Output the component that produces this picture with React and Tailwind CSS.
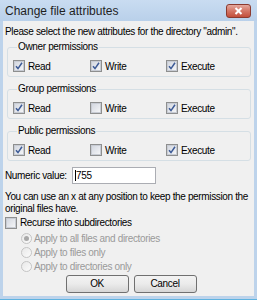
import React from 'react';

const font = { fontFamily: '"Liberation Sans", Arial, sans-serif' };

const Check = ({ checked, label }) => (
    <div className='flex items-center h-[16px]'>
        <span className='w-[12px] h-[12px] border border-[#8e8f8f] bg-white flex items-center justify-center'>
            <span className='w-[10px] h-[10px] bg-gradient-to-br from-[#d4d8e0] to-[#f4f5f7] border border-[#c8ccd4] flex items-center justify-center'>
                {checked && (
                    <svg width='8' height='8' viewBox='0 0 8 8'>
                        <path d='M1 4.3 L3 6.6 L7 0.8' fill='none' stroke='#3c5a96' strokeWidth='1.5' />
                    </svg>
                )}
            </span>
        </span>
        <span className='ml-[3px]'>{label}</span>
    </div>
);

const Group = ({ title, r, w, x, mt }) => (
    <fieldset className={`ml-[4px] mr-[3px] border border-[#d5dfe5] rounded-[3px] pl-[5px] pt-[5px] pb-[2px] ${mt}`}>
        <legend className='ml-[4px] px-[1px] h-[12px] leading-[12px]'>{title}</legend>
        <div className='flex'>
            <div className='w-[77px]'><Check checked={r} label='Read' /></div>
            <div className='w-[76px]'><Check checked={w} label='Write' /></div>
            <div><Check checked={x} label='Execute' /></div>
        </div>
    </fieldset>
);

const Radio = ({ checked, label }) => (
    <div className='flex items-center h-[14px] text-[#9a9a9a]'>
        <span className='w-[11px] h-[11px] rounded-full border border-[#c4c4c4] bg-gradient-to-br from-[#e8e8e8] to-[#fbfbfb] flex items-center justify-center'>
            {checked && <span className='w-[5px] h-[5px] rounded-full bg-[#a8a8a8]' />}
        </span>
        <span className='ml-[2px]'>{label}</span>
    </div>
);

const Button = ({ children }) => (
    <button className='w-[63px] h-[18px] border border-[#707070] rounded-[3px] bg-gradient-to-b from-[#f3f3f3] via-[#ebebeb] to-[#d6d6d6] text-black leading-[16px]'>
        {children}
    </button>
);

export default function App() {
    return (
        <div className='w-[257px] h-[300px] bg-[#bdd3eb] flex flex-col text-[10px] tracking-[-0.35px] text-black whitespace-nowrap' style={font}>
            <div className='h-[21px] flex items-center justify-between bg-gradient-to-b from-[#c9dcf1] to-[#b9d0ea] pl-[5px] pr-[6px]'>
                <span className='text-[12px] tracking-normal text-[#1e1e1e]'>Change file attributes</span>
                <span className='w-[25px] h-[14px] rounded-[3px] border border-[#8b3a2f] bg-gradient-to-b from-[#e3a89e] via-[#d47565] to-[#c24e3a] flex items-center justify-center'>
                    <svg width='9' height='8' viewBox='0 0 9 8'>
                        <path d='M1.5 1 L7.5 7 M7.5 1 L1.5 7' stroke='white' strokeWidth='2' />
                    </svg>
                </span>
            </div>
            <div className='mx-[3px] flex-1 bg-[#f0f0f0] flex flex-col'>
                <div className='mt-[5px] ml-[2px] h-[12px] leading-[12px]'>
                    Please select the new attributes for the directory "admin".
                </div>
                <Group title='Owner permissions' r w x mt='mt-[3px]' />
                <Group title='Group permissions' r={true} w={false} x={true} mt='mt-[6px]' />
                <Group title='Public permissions' r={true} w={false} x={true} mt='mt-[6px]' />
                <div className='mt-[6px] ml-[2px] flex items-center'>
                    <span className='w-[67px]'>Numeric value:</span>
                    <div className='w-[84px] h-[17px] border border-[#abadb3] bg-white flex items-center pl-[2px]'>
                        <span className='w-px h-[11px] bg-black' />
                        <span>755</span>
                    </div>
                </div>
                <div className='mt-[7px] ml-[2px] leading-[12px]'>
                    <div>You can use an x at any position to keep the permission the</div>
                    <div>original files have.</div>
                </div>
                <div className='mt-[1px] ml-[2px] flex items-center h-[13px]'>
                    <span className='w-[12px] h-[12px] border border-[#8e8f8f] bg-white flex items-center justify-center'>
                        <span className='w-[10px] h-[10px] bg-gradient-to-br from-[#d4d8e0] to-[#f4f5f7] border border-[#c8ccd4]' />
                    </span>
                    <span className='ml-[3px]'>Recurse into subdirectories</span>
                </div>
                <div className='mt-[2px] ml-[18px] flex flex-col'>
                    <Radio checked label='Apply to all files and directories' />
                    <Radio label='Apply to files only' />
                    <Radio label='Apply to directories only' />
                </div>
                <div className='mt-[2px] flex justify-center gap-[5px] pl-[5px]'>
                    <Button>OK</Button>
                    <Button>Cancel</Button>
                </div>
            </div>
            <div className='h-[4px] border-b border-[#5fb3e0]' />
        </div>
    );
}
